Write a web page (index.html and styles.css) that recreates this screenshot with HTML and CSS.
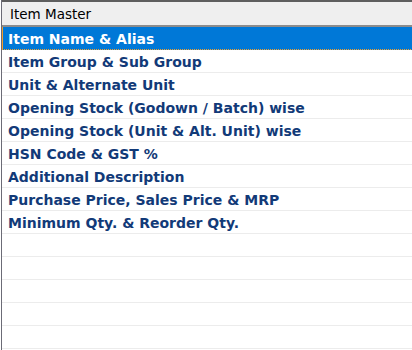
FILE: index.html
```html
<!DOCTYPE html>
<html>
<head>
<meta charset="utf-8">
<link rel="stylesheet" href="styles.css">
</head>
<body>
<div class="panel">
  <div class="header">Item Master</div>
  <ul class="list">
    <li class="row selected">Item Name &amp; Alias</li>
    <li class="row">Item Group &amp; Sub Group</li>
    <li class="row">Unit &amp; Alternate Unit</li>
    <li class="row">Opening Stock (Godown / Batch) wise</li>
    <li class="row">Opening Stock (Unit &amp; Alt. Unit) wise</li>
    <li class="row">HSN Code &amp; GST %</li>
    <li class="row">Additional Description</li>
    <li class="row">Purchase Price, Sales Price &amp; MRP</li>
    <li class="row">Minimum Qty. &amp; Reorder Qty.</li>
    <li class="row"></li>
    <li class="row"></li>
    <li class="row"></li>
    <li class="row"></li>
    <li class="row"></li>
  </ul>
</div>
</body>
</html>
```
FILE: styles.css
```css
html, body {
  margin: 0;
  padding: 0;
  background: #ffffff;
}
.panel {
  width: 411px;
  height: 350px;
  margin-left: 1px;
  border-left: 1px solid #6b6b76;
  overflow: hidden;
  font-family: "DejaVu Sans", "Open Sans", sans-serif;
}
.header {
  height: 23px;
  border-top: 2px solid #5e5e5e;
  border-bottom: 2px solid #8c8c8c;
  background: #efefef;
  color: #000000;
  font-size: 13.5px;
  line-height: 24px;
  padding-left: 8px;
}
.list {
  list-style: none;
  margin: 0;
  padding: 0;
}
.row {
  height: 19px;
  padding-top: 3px;
  line-height: 19px;
  border-bottom: 1px solid #ececec;
  padding-left: 6px;
  font-weight: bold;
  font-size: 14px;
  color: #123a78;
  white-space: nowrap;
}
.row.selected {
  background: #0078d7;
  color: #ffffff;
  border-bottom: 1px dotted #f0a030;
  box-shadow: inset 1px 0 0 #f0a030;
}
```
